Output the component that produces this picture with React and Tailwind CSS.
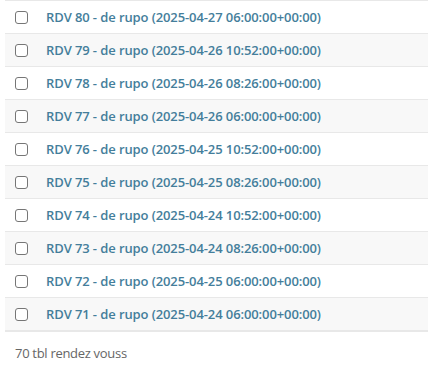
import React from 'react';

const rows = [
  { id: 80, date: '2025-04-27 06:00:00+00:00' },
  { id: 79, date: '2025-04-26 10:52:00+00:00' },
  { id: 78, date: '2025-04-26 08:26:00+00:00' },
  { id: 77, date: '2025-04-26 06:00:00+00:00' },
  { id: 76, date: '2025-04-25 10:52:00+00:00' },
  { id: 75, date: '2025-04-25 08:26:00+00:00' },
  { id: 74, date: '2025-04-24 10:52:00+00:00' },
  { id: 73, date: '2025-04-24 08:26:00+00:00' },
  { id: 72, date: '2025-04-25 06:00:00+00:00' },
  { id: 71, date: '2025-04-24 06:00:00+00:00' },
];

export default function App() {
  return (
    <div className="w-[428px] h-[370px] bg-white overflow-hidden" style={{ fontFamily: '"Open Sans", "Noto Sans", sans-serif' }}>
      <div className="ml-[5px]">
        {rows.map((r, i) => (
          <div
            key={r.id}
            className={`flex items-center h-[33px] border-t border-[#e8e8e8] ${i % 2 === 1 ? 'bg-[#f8f8f8]' : 'bg-white'}`}
          >
            <span className="ml-[10px] w-[13px] h-[13px] rounded-[3px] border border-[#767676] bg-white shrink-0" />
            <a className="ml-[18px] text-[13px] font-semibold tracking-[-0.1px] text-[#447e9b] whitespace-nowrap leading-none">
              RDV {r.id} - de rupo ({r.date})
            </a>
          </div>
        ))}
        <div className="border-t-2 border-[#e8e8e8]" />
      </div>
      <div className="pl-[15px] pt-[13px] text-[13px] tracking-[-0.3px] text-[#666] leading-[16px]">70 tbl rendez vouss</div>
    </div>
  );
}
